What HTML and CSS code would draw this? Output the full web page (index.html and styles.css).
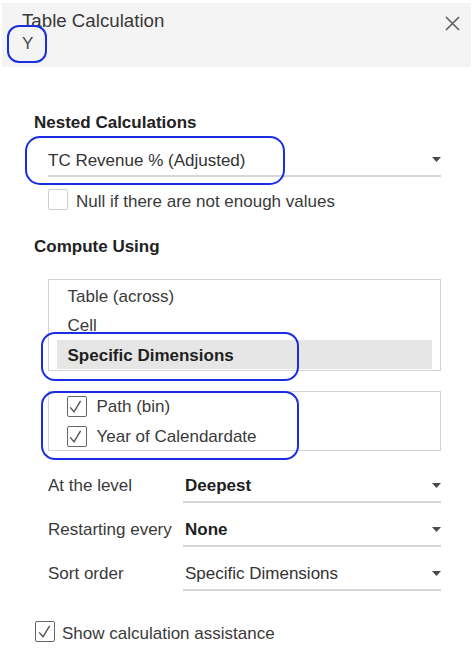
FILE: index.html
```html
<!DOCTYPE html>
<html lang="en">
<head>
<meta charset="utf-8">
<title>Table Calculation</title>
<link rel="stylesheet" href="styles.css">
</head>
<body>
<div class="dialog">
  <header class="titlebar">
    <div class="title-col">
      <div class="title">Table Calculation</div>
      <div class="subtitle">Y</div>
    </div>
    <button class="close" aria-label="Close">
      <svg width="15" height="15" viewBox="0 0 15 15"><path d="M1 1L14 14M14 1L1 14" stroke="#5f5f5f" stroke-width="1.6" fill="none"/></svg>
    </button>
    <div class="mark mark-y"></div>
  </header>

  <main class="content">
    <h2 class="section-title nested">Nested Calculations</h2>
    <div class="select select-main">
      <span class="select-text">TC Revenue % (Adjusted)</span>
      <svg class="caret" width="9" height="5" viewBox="0 0 9 5"><path d="M0 0H9L4.5 5Z" fill="#4a4a4a"/></svg>
      <div class="mark mark-select"></div>
    </div>
    <label class="check-row null-row">
      <span class="box"></span>
      <span class="check-label">Null if there are not enough values</span>
    </label>

    <h2 class="section-title compute">Compute Using</h2>
    <div class="listbox list-compute">
      <div class="list-item">Table (across)</div>
      <div class="list-item">Cell</div>
      <div class="list-item selected">Specific Dimensions</div>
      <div class="mark mark-specific"></div>
    </div>
    <div class="listbox list-dims">
      <label class="dim-row">
        <span class="box checked"><svg width="20" height="21" viewBox="0 0 20 21"><path d="M4.2 11.4L8 15.8L14.6 4.8" stroke="#555" stroke-width="1.4" fill="none"/></svg></span>
        <span class="check-label">Path (bin)</span>
      </label>
      <label class="dim-row">
        <span class="box checked"><svg width="20" height="21" viewBox="0 0 20 21"><path d="M4.2 11.4L8 15.8L14.6 4.8" stroke="#555" stroke-width="1.4" fill="none"/></svg></span>
        <span class="check-label">Year of Calendardate</span>
      </label>
      <div class="mark mark-dims"></div>
    </div>

    <div class="settings">
      <div class="setting-label">At the level</div>
      <div class="select select-row">
        <span class="select-text strong">Deepest</span>
        <svg class="caret" width="9" height="5" viewBox="0 0 9 5"><path d="M0 0H9L4.5 5Z" fill="#4a4a4a"/></svg>
      </div>
      <div class="setting-label">Restarting every</div>
      <div class="select select-row">
        <span class="select-text strong">None</span>
        <svg class="caret" width="9" height="5" viewBox="0 0 9 5"><path d="M0 0H9L4.5 5Z" fill="#4a4a4a"/></svg>
      </div>
      <div class="setting-label">Sort order</div>
      <div class="select select-row">
        <span class="select-text">Specific Dimensions</span>
        <svg class="caret" width="9" height="5" viewBox="0 0 9 5"><path d="M0 0H9L4.5 5Z" fill="#4a4a4a"/></svg>
      </div>
    </div>

    <label class="check-row assist-row">
      <span class="box checked"><svg width="20" height="21" viewBox="0 0 20 21"><path d="M4.2 11.4L8 15.8L14.6 4.8" stroke="#555" stroke-width="1.4" fill="none"/></svg></span>
      <span class="check-label">Show calculation assistance</span>
    </label>
  </main>
</div>
</body>
</html>
```
FILE: styles.css
```css
* { box-sizing: border-box; }

html, body {
  margin: 0;
  padding: 0;
  background: #ffffff;
}

body {
  font-family: "Liberation Sans", Arial, sans-serif;
  font-size: 17px;
  line-height: 20px;
  color: #333333;
}

.dialog {
  width: 474px;
  height: 669px;
  padding-top: 3px;
  overflow: hidden;
}

.titlebar {
  position: relative;
  display: flex;
  justify-content: space-between;
  align-items: flex-start;
  height: 64px;
  margin: 0 3px 0 2px;
  padding: 7px 11px 0 20px;
  background: #f5f4f5;
}

.title {
  font-size: 18.7px;
  line-height: 22px;
  color: #383838;
}

.subtitle {
  margin-top: 2px;
  font-size: 17px;
  line-height: 20px;
  color: #4a4a4a;
}

.close {
  margin-top: 6px;
  padding: 0;
  border: 0;
  background: transparent;
  width: 15px;
  height: 15px;
  display: block;
}
.close svg { display: block; }

/* blue annotation outlines */
.mark {
  position: absolute;
  border: 2.7px solid #1a2de0;
  pointer-events: none;
}
.mark-y {
  left: 5px;
  top: 22px;
  width: 40px;
  height: 38px;
  border-radius: 12px;
}
.mark-select {
  left: -23px;
  top: -15px;
  width: 260px;
  height: 49px;
  border-radius: 15px;
}
.mark-specific {
  left: -8px;
  top: 52px;
  width: 258px;
  height: 49px;
  border-radius: 14px;
}
.mark-dims {
  left: -8px;
  top: -1px;
  width: 258px;
  height: 69px;
  border-radius: 14px;
}

.content {
  padding-left: 34px;
}

.section-title {
  margin: 0;
  font-size: 17px;
  line-height: 20px;
  font-weight: bold;
  color: #222222;
}
.nested { margin-top: 46px; }
.compute { margin-top: 25px; }

.select {
  position: relative;
  display: flex;
  align-items: flex-start;
  justify-content: space-between;
  border-bottom: 2px solid #d6d6d6;
}
.select-text {
  line-height: 20px;
  color: #333333;
}
.select-text.strong {
  font-weight: bold;
  color: #1f1f1f;
}
.caret { display: block; flex: none; }

.select-main {
  margin: 18px 0 0 14px;
  width: 393px;
  padding-bottom: 4px;
}
.select-main .caret { margin-top: 6px; }

.check-row {
  display: flex;
  align-items: flex-start;
}
.box {
  display: block;
  flex: none;
  width: 20px;
  height: 21px;
  border: 1.5px solid #cfcfcf;
  border-radius: 2px;
  background: #ffffff;
  position: relative;
}
.box.checked { border-color: #666666; }
.box svg {
  position: absolute;
  left: -1.5px;
  top: -1.5px;
  display: block;
}
.check-label {
  margin-top: 1px;
  line-height: 20px;
  color: #3a3a3a;
}

.null-row {
  margin: 12px 0 0 14px;
}
.null-row .check-label { margin-left: 8px; margin-top: 3px; }

.listbox {
  position: relative;
  width: 393px;
  margin-left: 14px;
  border: 1.5px solid #d2d2d2;
}
.list-compute {
  margin-top: 22px;
  height: 92px;
  padding: 1.5px 8.5px 0 7.5px;
}
.list-item {
  height: 29px;
  line-height: 29px;
  padding-left: 11px;
  color: #3a3a3a;
}
.list-item.selected {
  background: #e6e6e6;
  font-weight: bold;
  color: #1f1f1f;
  padding-top: 1px;
}

.list-dims {
  margin-top: 20px;
  padding: 4px 0 3px 17.5px;
  display: flex;
  flex-direction: column;
  gap: 9px;
}
.dim-row {
  display: flex;
  align-items: flex-start;
}
.dim-row .check-label { margin-left: 10px; }

.settings {
  margin: 25px 0 0 14px;
  width: 393px;
  display: grid;
  grid-template-columns: 135px 258px;
  row-gap: 17px;
}
.setting-label {
  line-height: 20px;
  color: #3a3a3a;
}
.select-row {
  padding-left: 2px;
  padding-bottom: 5px;
}
.select-row .caret { margin-top: 7px; }

.assist-row {
  margin-top: 30px;
  margin-left: 1px;
}
.assist-row .check-label {
  margin-left: 7px;
  margin-top: 2.5px;
}
```
